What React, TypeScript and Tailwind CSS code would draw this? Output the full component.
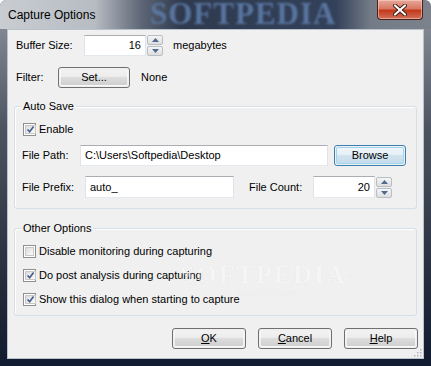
import React from 'react'

const font = { fontFamily: '"Liberation Sans", Arial, sans-serif' }

function Check({ checked }: { checked?: boolean }) {
  return (
    <span className="w-[13px] h-[13px] shrink-0 border border-[#8e8f8f] bg-white p-[1px] flex">
      <span className="flex-1 border border-[#c8c8c8] bg-[linear-gradient(135deg,#dcdcdc,#fbfbfb)] flex items-center justify-center">
        {checked && (
          <svg width="9" height="9" viewBox="0 0 9 9">
            <path d="M1.5 4.5 L3.6 6.8 L7.6 1.4" fill="none" stroke="#4a5f8e" strokeWidth="1.7" strokeLinejoin="round" />
          </svg>
        )}
      </span>
    </span>
  )
}

function Btn({ children, w, primary }: { children: React.ReactNode; w: string; primary?: boolean }) {
  return (
    <div
      className={`${w} h-[21px] rounded-[3px] border p-[1px] flex ${primary ? 'border-[#3c7fb1]' : 'border-[#707070]'}`}
    >
      <div
        className={`flex-1 rounded-[2px] flex items-center justify-center text-[11px] text-black ${
          primary
            ? 'bg-[linear-gradient(#f0f6fa_0%,#e4eef5_50%,#d2e3ee_50%,#c6dbea_100%)] border border-[#9fd4f3]'
            : 'bg-[linear-gradient(#f2f2f2_0%,#ebebeb_50%,#dddddd_50%,#cfcfcf_100%)] border border-[#fcfcfc]/70'
        }`}
      >
        {children}
      </div>
    </div>
  )
}

function Input({ value, w, right }: { value: string; w: string; right?: boolean }) {
  return (
    <div
      className={`${w} h-[21px] bg-white border border-[#e2e3ea] border-t-[#abadb3] border-b-[#e3e9ef] flex items-center text-[11px] text-black px-[4px] ${
        right ? 'justify-end' : ''
      }`}
    >
      {value}
    </div>
  )
}

function Spin() {
  return (
    <div className="w-[16px] h-[21px] flex flex-col gap-[1px] ml-[1px]">
      {[0, 1].map(i => (
        <div
          key={i}
          className="flex-1 border border-[#b9bdc4] rounded-[2px] bg-[linear-gradient(#f5f5f5,#dedede)] flex items-center justify-center"
        >
          <svg width="7" height="4" viewBox="0 0 7 4">
            <path d={i === 0 ? 'M0 4 L3.5 0 L7 4 Z' : 'M0 0 L3.5 4 L7 0 Z'} fill="#4f6a91" />
          </svg>
        </div>
      ))}
    </div>
  )
}

function Group({ title, children, cls }: { title: string; children: React.ReactNode; cls: string }) {
  return (
    <div className={`relative mx-[6px] border border-[#d5dfe5] rounded-[3px] shadow-[inset_1px_1px_0_#ffffff] ${cls}`}>
      <span className="absolute left-[6px] -top-[8px] px-[2px] bg-[#f0f0f0] text-[11px] leading-[14px] text-black">
        {title}
      </span>
      {children}
    </div>
  )
}

export default function App() {
  return (
    <div
      style={font}
      className="w-[431px] h-[366px] overflow-hidden rounded-t-[6px] flex flex-col bg-[linear-gradient(#8f959e_0%,#4d5461_35%,#222a3a_80%,#101a30_100%)]"
    >
      {/* Title bar */}
      <div className="relative h-[29px] shrink-0 overflow-hidden flex items-start rounded-t-[6px] bg-[linear-gradient(90deg,#c9cdd2_0%,#b7bcc2_22%,#5c6574_33%,#2f3a4e_42%,#33415a_78%,#737b86_86%,#7b828c_100%)]">
        <span
          className="absolute left-[150px] top-0 text-[31px] leading-[28px] font-bold tracking-[1px] text-[#5d7ba8] blur-[1px] opacity-90"
          style={{ fontFamily: '"Liberation Serif", serif' }}
        >
          SOFTPEDIA
        </span>
        <span className="relative ml-[8px] mt-[7px] text-[12px] leading-[16px] text-black">Capture Options</span>
        <div className="relative ml-auto mr-[8px] w-[46px] h-[20px] rounded-b-[4px] border border-t-0 border-[#4a2219] bg-[linear-gradient(#e8a99b_0%,#d77863_45%,#c4391b_55%,#d0705a_100%)] shadow-[inset_0_0_0_1px_rgba(255,220,210,0.5)] flex items-center justify-center">
          <svg width="14" height="12" viewBox="0 0 14 12">
            <path d="M2 1.5 L12 10.5 M12 1.5 L2 10.5" stroke="#3a1a14" strokeWidth="4" strokeLinecap="round" />
            <path d="M2 1.5 L12 10.5 M12 1.5 L2 10.5" stroke="#ffffff" strokeWidth="2.2" strokeLinecap="round" />
          </svg>
        </div>
      </div>

      {/* Client area */}
      <div className="relative mx-[7px] mb-[7px] flex-1 border border-[#b9c1cc] bg-[#f0f0f0] flex flex-col text-black">
        <div className="flex items-center mt-[5px] h-[21px]">
          <span className="ml-[8px] w-[68px] text-[11px]">Buffer Size:</span>
          <Input value="16" w="w-[62px]" right />
          <Spin />
          <span className="ml-[10px] text-[11px]">megabytes</span>
        </div>

        <div className="flex items-center mt-[11px] h-[21px]">
          <span className="ml-[8px] w-[42px] text-[11px]">Filter:</span>
          <Btn w="w-[72px]">Set...</Btn>
          <span className="ml-[11px] text-[11px]">None</span>
        </div>

        <Group title="Auto Save" cls="mt-[18px] h-[103px] flex flex-col">
          <div className="flex items-center mt-[15px] ml-[8px] h-[14px] gap-[3px]">
            <Check checked />
            <span className="text-[11px]">Enable</span>
          </div>
          <div className="flex items-center mt-[9px] h-[21px]">
            <span className="ml-[7px] w-[58px] text-[11px]">File Path:</span>
            <Input value="C:\Users\Softpedia\Desktop" w="w-[248px]" />
            <div className="ml-[6px]">
              <Btn w="w-[72px]" primary>Browse</Btn>
            </div>
          </div>
          <div className="flex items-center mt-[10px] h-[22px]">
            <span className="ml-[7px] w-[63px] text-[11px]">File Prefix:</span>
            <Input value="auto_" w="w-[149px] h-[22px]" />
            <span className="ml-[15px] w-[64px] text-[11px]">File Count:</span>
            <Input value="20" w="w-[62px] h-[22px]" right />
            <Spin />
          </div>
        </Group>

        <Group title="Other Options" cls="mt-[19px] h-[88px] flex flex-col">
          <div className="flex flex-col gap-[11px] mt-[16px] ml-[8px]">
            <div className="flex items-center gap-[3px] h-[13px]">
              <Check />
              <span className="text-[11px]">Disable monitoring during capturing</span>
            </div>
            <div className="flex items-center gap-[3px] h-[13px]">
              <Check checked />
              <span className="text-[11px]">Do post analysis during capturing</span>
            </div>
            <div className="flex items-center gap-[3px] h-[13px]">
              <Check checked />
              <span className="text-[11px]">Show this dialog when starting to capture</span>
            </div>
          </div>
        </Group>

        <div className="flex justify-end gap-[12px] mt-[12px] mr-[5px]">
          <Btn w="w-[74px]"><span className="underline underline-offset-1">O</span>K</Btn>
          <Btn w="w-[74px]"><span className="underline underline-offset-1">C</span>ancel</Btn>
          <Btn w="w-[74px]"><span className="underline underline-offset-1">H</span>elp</Btn>
        </div>

        {/* size grip */}
        <svg className="absolute right-[1px] bottom-[1px]" width="10" height="10" viewBox="0 0 10 10">
          {[[8, 2], [8, 5], [5, 5], [8, 8], [5, 8], [2, 8]].map(([x, y], i) => (
            <rect key={i} x={x} y={y} width="1.5" height="1.5" fill="#b7b7b7" />
          ))}
        </svg>

        {/* watermark */}
        <div className="absolute left-[172px] top-[232px] flex flex-col items-center pointer-events-none opacity-35">
          <span className="text-[26px] leading-[26px] font-bold tracking-[2px] text-white [text-shadow:0_0_1px_#b8b8b8]" style={{ fontFamily: '"Liberation Serif", serif' }}>
            SOFTPEDIA<sup className="text-[7px] font-normal">™</sup>
          </span>
          <span className="text-[7px] text-white [text-shadow:0_0_1px_#b8b8b8]">www.softpedia.com</span>
        </div>
      </div>
    </div>
  )
}
